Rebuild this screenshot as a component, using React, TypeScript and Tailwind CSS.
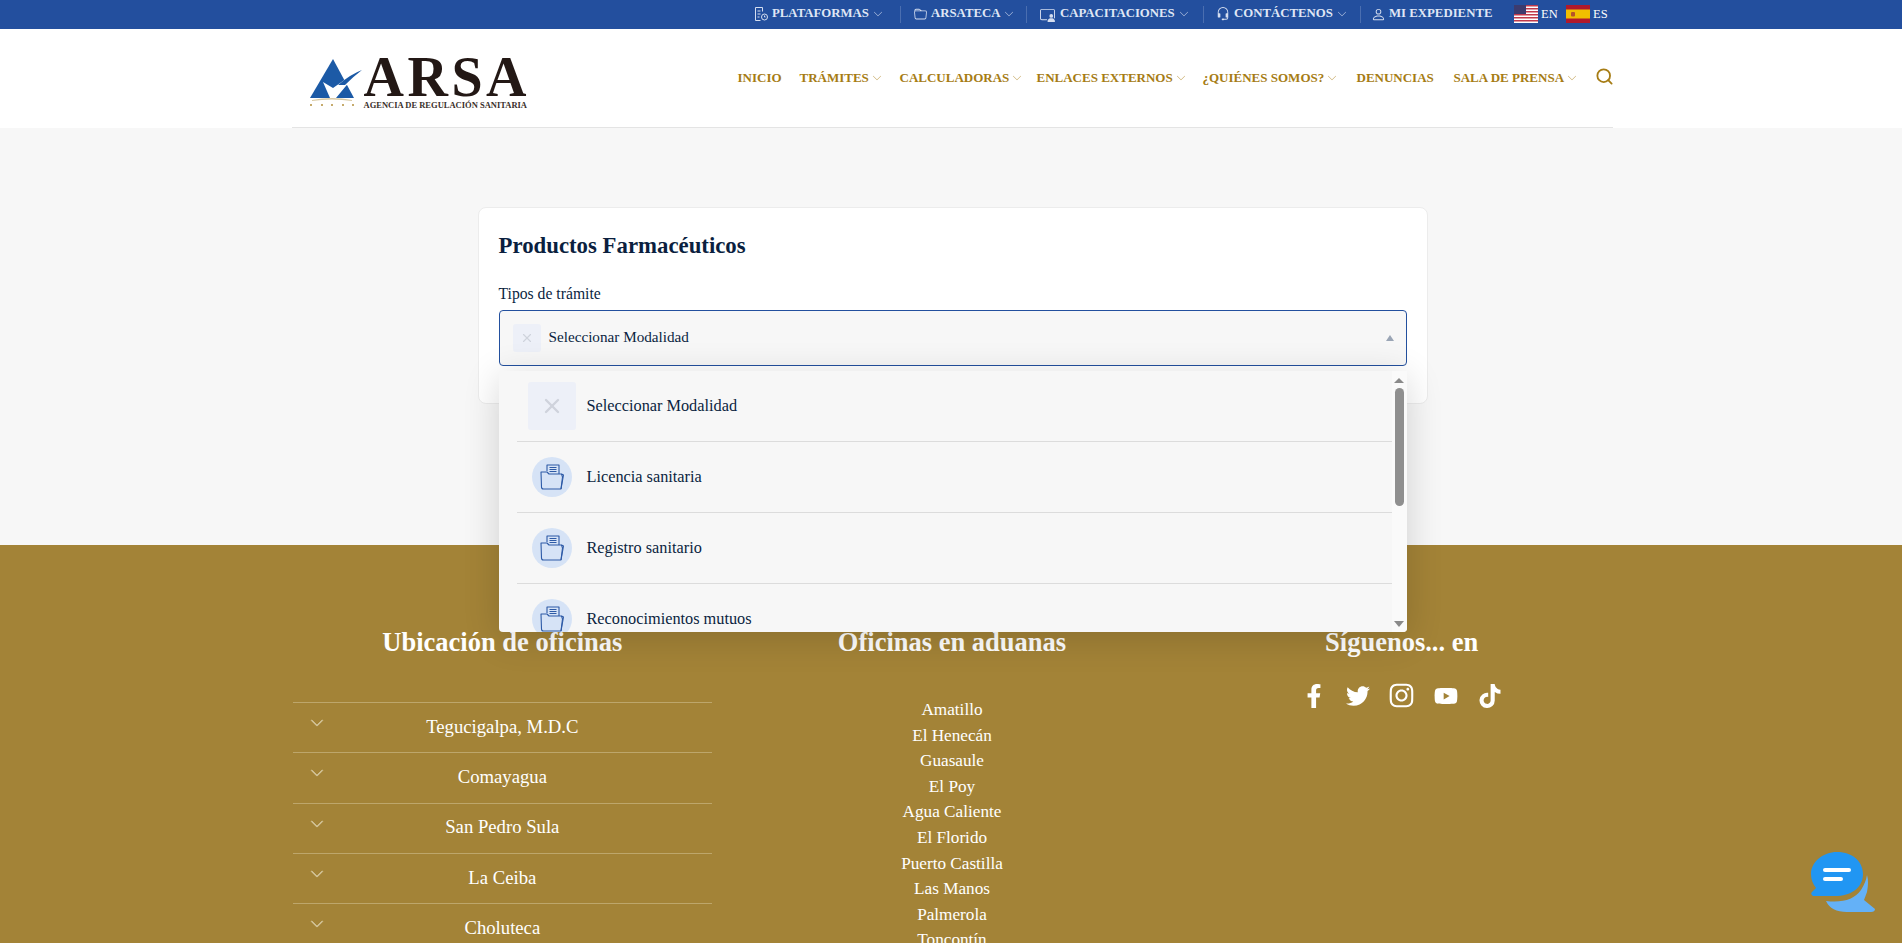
import { BsChevronDown, BsFolder, BsHeadset, BsPerson, BsPersonVideo3 } from 'react-icons/bs';
import { FaFacebookF, FaTwitter, FaInstagram, FaYoutube, FaTiktok } from 'react-icons/fa';
import { Search, X } from 'lucide-react';
import type { ReactNode } from 'react';

const serif = { fontFamily: '"Liberation Serif", serif' };

function PlatformIcon() {
  return (
    <svg viewBox="0 0 16 16" className="h-4 w-4" fill="none" stroke="currentColor" strokeWidth="1">
      <path d="M2.5 1.5h7v4M2.5 1.5v13h5" />
      <path d="M4.5 5h3M4.5 8h3M4.5 11h2" />
      <circle cx="11.5" cy="11" r="3" />
      <path d="M11.5 9.5V11h1" />
    </svg>
  );
}

function UsFlag() {
  return (
    <svg viewBox="0 0 24 18" className="h-[18px] w-6">
      <rect width="24" height="18" fill="#fff" />
      {[0, 3, 6, 9, 12, 15].map((y) => (
        <rect key={y} y={y} width="24" height="1.5" fill="#c0394b" />
      ))}
      <rect width="12" height="9" fill="#3c3b6e" />
    </svg>
  );
}

function EsFlag() {
  return (
    <svg viewBox="0 0 24 18" className="h-[18px] w-6">
      <rect width="24" height="18" fill="#b0192c" />
      <rect y="4.5" width="24" height="9" fill="#f1bf00" />
      <rect x="5" y="7" width="4" height="4.5" rx="1" fill="#b5532a" />
    </svg>
  );
}

function TopItem({ icon, label, caret, w, slot = 'w-[16px]' }: { icon: ReactNode; label: string; caret?: boolean; w: string; slot?: string }) {
  return (
    <div className={`flex items-center ${w}`}>
      <span className={`mr-[3px] flex justify-center text-[#d5def0] ${slot}`}>{icon}</span>
      <span className="whitespace-nowrap text-[12.8px] font-bold text-[#dfe6f5]">{label}</span>
      {caret && <BsChevronDown className="ml-[4px] text-[#c3cfe8]" size={10} />}
    </div>
  );
}

function Sep() {
  return <span className="h-[17px] w-px bg-[#4a6eb0]" />;
}

function TopBar() {
  return (
    <div className="flex h-[29px] items-center bg-[#234f9e] pb-[1px] pl-[753px]" style={serif}>
      <TopItem w="w-[147px]" icon={<PlatformIcon />} label="PLATAFORMAS" caret />
      <Sep />
      <div className="w-[11px]" />
      <TopItem w="w-[114px]" icon={<BsFolder size={13} />} label="ARSATECA" caret />
      <Sep />
      <div className="w-[11px]" />
      <TopItem w="w-[165px]" slot="w-[19px]" icon={<BsPersonVideo3 size={15} />} label="CAPACITACIONES" caret />
      <Sep />
      <div className="w-[11px]" />
      <TopItem w="w-[145px]" icon={<BsHeadset size={14} />} label="CONTÁCTENOS" caret />
      <Sep />
      <div className="w-[9px]" />
      <TopItem w="w-[144px]" icon={<BsPerson size={15} />} label="MI EXPEDIENTE" />
      <UsFlag />
      <span className="ml-[3px] w-[25px] text-[12.5px] text-white">EN</span>
      <EsFlag />
      <span className="ml-[3px] text-[12.5px] text-white">ES</span>
    </div>
  );
}

function Logo() {
  return (
    <div className="flex w-[240px] items-start">
      <svg viewBox="0 0 56 56" className="h-[56px] w-[56px] shrink-0">
        <path d="M25 1 L46 40 L2 40 Z" fill="#1c5aa6" />
        <path d="M15 24 L25 30 L52 11 L28 40 L22 40 Z" fill="#fff" />
        <path d="M30 27 Q43 16 54 12 Q46 18 37 27 Z" fill="#1c5aa6" />
        <path d="M4 42 Q24 38 44 42 L44 43 Q24 40 4 43 Z" fill="#d9c9a3" />
        {[3, 14, 24, 35, 45].map((x) => (
          <circle key={x} cx={x} cy="47" r="1" fill="#b38f3c" />
        ))}
      </svg>
      <div className="flex flex-col text-[#231815]" style={serif}>
        <span className="h-[39px] text-[56px] leading-[39px] font-bold tracking-[3.5px] whitespace-nowrap">ARSA</span>
        <span className="mt-[3px] text-[8.5px] leading-[10px] font-bold whitespace-nowrap text-[#3a2f2b]">
          AGENCIA DE REGULACIÓN SANITARIA
        </span>
      </div>
    </div>
  );
}

function NavItem({ label, caret, w }: { label: string; caret?: boolean; w: string }) {
  return (
    <div className={`flex items-center ${w}`}>
      <span className="whitespace-nowrap text-[13px] font-bold text-[#a67c14]">{label}</span>
      {caret && <BsChevronDown className="ml-[3px] text-[#c2a35a]" size={10} />}
    </div>
  );
}

function Header() {
  return (
    <div className="mx-auto flex h-[99px] w-[1321px] border-b border-[#e4e4e4] bg-white pl-[16px]" style={serif}>
      <div className="pt-[29px]">
        <Logo />
      </div>
      <div className="ml-[190px] flex items-center">
        <NavItem w="w-[62px]" label="INICIO" />
        <NavItem w="w-[100px]" label="TRÁMITES" caret />
        <NavItem w="w-[137px]" label="CALCULADORAS" caret />
        <NavItem w="w-[166px]" label="ENLACES EXTERNOS" caret />
        <NavItem w="w-[154px]" label="¿QUIÉNES SOMOS?" caret />
        <NavItem w="w-[97px]" label="DENUNCIAS" />
        <NavItem w="w-[141px]" label="SALA DE PRENSA" caret />
        <Search className="-mt-[3px] text-[#a67c14]" size={19} strokeWidth={2.3} />
      </div>
    </div>
  );
}

function FolderIcon() {
  return (
    <svg viewBox="0 0 26 26" className="h-[26px] w-[26px]" fill="none" stroke="#2d5aa6" strokeWidth="1.1" strokeLinejoin="round">
      <path d="M8 7V1h12v9" fill="#d6e3f6" />
      <path d="M10.5 3.5h7M10.5 5.5h7M10.5 7.5h7" />
      <path d="M2 8h6l2 2h12.5l1 3L22 25H4.5a2 2 0 0 1-2-2z" fill="#d6e3f6" />
      <path d="M22.5 10l2 1-2.5 14" />
    </svg>
  );
}

const options = ['Licencia sanitaria', 'Registro sanitario', 'Reconocimientos mutuos'];

function Dropdown() {
  return (
    <div className="absolute top-[61px] left-0 flex h-[261px] w-[908px] overflow-hidden rounded-b-[4px] bg-[#f7f7f7] shadow-[0_6px_36px_rgba(0,0,0,0.16)]">
      <div className="flex-1 pl-[18px]">
        <div className="flex items-center border-b border-[#dcdcdc] py-[11px] pl-[11px]">
          <div className="flex h-[48px] w-[48px] items-center justify-center rounded-[3px] bg-[#edf0f8]">
            <X className="text-[#cfd3dc]" size={24} strokeWidth={2.4} />
          </div>
          <span className="ml-[11px] text-[16.3px] text-[#0b1f3f]">Seleccionar Modalidad</span>
        </div>
        {options.map((o) => (
          <div key={o} className="flex h-[71px] items-center border-b border-[#dcdcdc] pl-[15px]">
            <div className="flex h-[40px] w-[40px] items-center justify-center rounded-full bg-[#d6e3f6]">
              <FolderIcon />
            </div>
            <span className="ml-[15px] text-[16.3px] text-[#0b1f3f]">{o}</span>
          </div>
        ))}
      </div>
      <div className="flex w-[15px] flex-col items-center bg-[#fafafa] pt-[7px]">
        <span className="h-0 w-0 border-x-[5px] border-b-[5px] border-x-transparent border-b-[#8a8a8a]" />
        <span className="mt-[5px] h-[118px] w-[9px] rounded-full bg-[#8f8f8f]" />
        <span className="mt-auto mb-[5px] h-0 w-0 border-x-[5px] border-t-[6px] border-x-transparent border-t-[#8a8a8a]" />
      </div>
    </div>
  );
}

function FormCard() {
  return (
    <div className="mx-auto h-[197px] w-[950px] rounded-[8px] border border-[#ececec] bg-white px-[20px] pt-[24px]" style={serif}>
      <h1 className="text-[22.8px] leading-[27px] font-bold text-[#0b1f3f]">Productos Farmacéuticos</h1>
      <div className="mt-[26px] text-[15.7px] leading-[18px] text-[#0b1f3f]">Tipos de trámite</div>
      <div className="relative mt-[7px]">
        <div className="flex h-[56px] w-[908px] items-center rounded-[4px] border border-[#23509e] bg-[#f7f7f7] pr-[12px] pb-[1px] pl-[13px]">
          <div className="flex h-[28px] w-[28px] items-center justify-center rounded-[3px] bg-[#edf0f8]">
            <X className="text-[#cfd3dc]" size={14} strokeWidth={2} />
          </div>
          <span className="ml-[8px] text-[15.2px] text-[#0b1f3f]">Seleccionar Modalidad</span>
          <span className="ml-auto h-0 w-0 border-x-[4px] border-b-[6px] border-x-transparent border-b-[#9aa5b5]" />
        </div>
        <Dropdown />
      </div>
    </div>
  );
}

const offices = ['Tegucigalpa, M.D.C', 'Comayagua', 'San Pedro Sula', 'La Ceiba', 'Choluteca'];
const customs = [
  'Amatillo',
  'El Henecán',
  'Guasaule',
  'El Poy',
  'Agua Caliente',
  'El Florido',
  'Puerto Castilla',
  'Las Manos',
  'Palmerola',
  'Toncontín',
];

function Footer() {
  return (
    <div className="h-[398px] bg-[#a38337] pl-[2px] text-white" style={serif}>
      <div className="mx-auto grid w-[1349px] grid-cols-3 pt-[81px]">
        <div className="px-[15px]">
          <h2 className="text-center text-[26.5px] leading-[32px] font-bold">Ubicación de oficinas</h2>
          <div className="mt-[44px]">
            {offices.map((o) => (
              <div key={o} className="relative flex h-[50.3px] items-center justify-center border-t border-[#bda66b] pb-[2px] text-[18.7px]">
                <BsChevronDown className="absolute top-[13px] left-[17px] text-[#d4c69c]" size={14} strokeWidth={0.8} stroke="currentColor" />
                {o}
              </div>
            ))}
          </div>
        </div>
        <div>
          <h2 className="text-center text-[26.5px] leading-[32px] font-bold">Oficinas en aduanas</h2>
          <div className="mt-[39px] flex flex-col items-center">
            {customs.map((c) => (
              <div key={c} className="h-[25.6px] text-[17.2px] leading-[25.6px]">
                {c}
              </div>
            ))}
          </div>
        </div>
        <div>
          <h2 className="text-center text-[26.5px] leading-[32px] font-bold">Síguenos... en</h2>
          <div className="mt-[24px] flex items-center justify-center gap-[20px] text-[24px]">
            <FaFacebookF />
            <FaTwitter />
            <FaInstagram className="-mx-[1.5px]" size={27} />
            <FaYoutube />
            <FaTiktok />
          </div>
        </div>
      </div>
    </div>
  );
}

function ChatWidget() {
  return (
    <svg viewBox="0 0 64 60" className="absolute top-[852px] left-[1811px] h-[60px] w-[64px]">
      <path d="M56 23 Q58 30 56 40 L53 48 L64 57 Q64 60 60 60 L36 60 Q20 60 15 49 Q40 52 50 38 Q55 30 56 23 Z" fill="#64b1f7" />
      <path d="M26 0 C42 0 52 10 52 22 C52 36 40 44 24 44 L2 44 Q-1 42 1 40 L5 36 C2 32 0 28 0 22 C0 10 12 0 26 0 Z" fill="#2196f3" />
      <rect x="12" y="16" width="28" height="4" rx="2" fill="#fff" />
      <rect x="12" y="25" width="20" height="4" rx="2" fill="#fff" />
    </svg>
  );
}

export default function App() {
  return (
    <div className="relative h-[943px] overflow-hidden bg-[#f7f7f7]">
      <TopBar />
      <div className="bg-white pl-[2px]">
        <Header />
      </div>
      <div className="h-[417px] pt-[79px] pl-[3px]">
        <FormCard />
      </div>
      <Footer />
      <ChatWidget />
    </div>
  );
}
